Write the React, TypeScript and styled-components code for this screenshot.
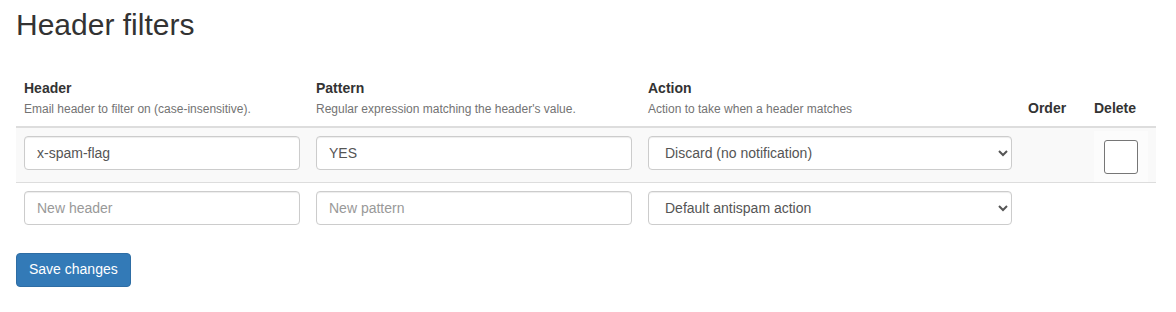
import * as React from "react";
import styled, { createGlobalStyle } from "styled-components";

const GlobalStyle = createGlobalStyle`
  html, body {
    margin: 0;
    padding: 0;
    background: #fff;
  }
  body {
    font-family: "Liberation Sans", Arial, Helvetica, sans-serif;
    font-size: 14px;
    line-height: 1.42857;
    color: #333;
  }
  * {
    box-sizing: border-box;
  }
`;

const Page = styled.div`
  padding: 8px 20px 0 16px;
`;

const Title = styled.h1`
  margin: 0 0 29px;
  font-size: 30px;
  font-weight: normal;
  line-height: 33px;
  color: #333;
`;

const Table = styled.table`
  width: 1140px;
  table-layout: fixed;
  border-collapse: collapse;
  border-spacing: 0;
  margin-bottom: 20px;
`;

const HeadCell = styled.th<{ $width: number }>`
  width: ${(p) => p.$width}px;
  padding: 8px;
  text-align: left;
  vertical-align: bottom;
  border-bottom: 2px solid #ddd;
  font-weight: bold;
  line-height: 20px;
`;

const Help = styled.div`
  margin-top: 3px;
  font-size: 12px;
  line-height: 17px;
  font-weight: normal;
  color: #737373;
`;

const Body = styled.tbody`
  tr + tr td {
    border-top: 1px solid #ddd;
  }
`;

const Row = styled.tr<{ $striped?: boolean }>`
  background: ${(p) => (p.$striped ? "#f9f9f9" : "transparent")};
`;

const Cell = styled.td`
  padding: 8px;
  vertical-align: top;
`;

const controlBase = `
  display: block;
  width: 100%;
  height: 34px;
  padding: 6px 12px;
  font-family: "Liberation Sans", Arial, Helvetica, sans-serif;
  font-size: 14px;
  line-height: 1.42857;
  color: #555;
  background-color: #fff;
  border: 1px solid #ccc;
  border-radius: 4px;
  box-shadow: inset 0 1px 1px rgba(0, 0, 0, 0.075);
`;

const TextInput = styled.input`
  ${controlBase}
  &::placeholder {
    color: #999;
  }
`;

const Select = styled.select`
  ${controlBase}
`;

const CheckWrap = styled.div`
  margin: -5px 0 -8px;
  padding: 9px 10px 8px;
  background: #fcfcfc;
`;

const CheckBox = styled.input`
  display: block;
  width: 34px;
  height: 34px;
  margin: 0;
  appearance: none;
  background: #fff;
  border: 1px solid #767676;
  border-radius: 3px;
`;

const SaveButton = styled.button`
  display: inline-block;
  height: 34px;
  padding: 6px 12px;
  font-family: "Liberation Sans", Arial, Helvetica, sans-serif;
  font-size: 14px;
  line-height: 1.42857;
  color: #fff;
  background-color: #337ab7;
  border: 1px solid #2e6da4;
  border-radius: 4px;
  cursor: pointer;
`;

interface IFilter {
  header:string;
  pattern:string;
  action:string;
}

const actions = [
  "Default antispam action",
  "Discard (no notification)",
  "Move to spam folder",
  "Reject with notification",
];

const filters:IFilter[] = [
  { header: "x-spam-flag", pattern: "YES", action: "Discard (no notification)" },
];

export default function App() {
  return (
    <Page>
      <GlobalStyle />
      <Title>Header filters</Title>
      <Table>
        <thead>
          <tr>
            <HeadCell $width={292}>
              Header
              <Help>Email header to filter on (case-insensitive).</Help>
            </HeadCell>
            <HeadCell $width={332}>
              Pattern
              <Help>Regular expression matching the header's value.</Help>
            </HeadCell>
            <HeadCell $width={380}>
              Action
              <Help>Action to take when a header matches</Help>
            </HeadCell>
            <HeadCell $width={66}>Order</HeadCell>
            <HeadCell $width={70}>Delete</HeadCell>
          </tr>
        </thead>
        <Body>
          {filters.map((f) => (
            <Row $striped key={f.header}>
              <Cell>
                <TextInput defaultValue={f.header} />
              </Cell>
              <Cell>
                <TextInput defaultValue={f.pattern} />
              </Cell>
              <Cell>
                <Select defaultValue={f.action}>
                  {actions.map((a) => (
                    <option key={a}>{a}</option>
                  ))}
                </Select>
              </Cell>
              <Cell />
              <Cell>
                <CheckWrap>
                  <CheckBox type="checkbox" />
                </CheckWrap>
              </Cell>
            </Row>
          ))}
          <Row>
            <Cell>
              <TextInput placeholder="New header" />
            </Cell>
            <Cell>
              <TextInput placeholder="New pattern" />
            </Cell>
            <Cell>
              <Select defaultValue="Default antispam action">
                {actions.map((a) => (
                  <option key={a}>{a}</option>
                ))}
              </Select>
            </Cell>
            <Cell />
            <Cell />
          </Row>
        </Body>
      </Table>
      <SaveButton type="button">Save changes</SaveButton>
    </Page>
  );
}
